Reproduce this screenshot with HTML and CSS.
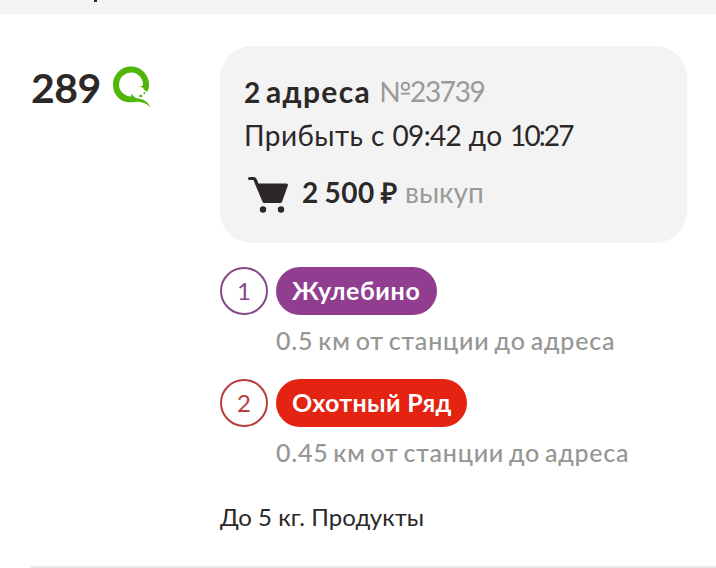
FILE: index.html
```html
<!DOCTYPE html>
<html lang="ru">
<head>
<meta charset="utf-8">
<title>Заказ</title>
<link rel="stylesheet" href="styles.css">
</head>
<body>
<header class="band"><i class="stem"></i></header>
<main class="order">
  <div class="price"><span class="amount">289</span>
    <svg class="coin" viewBox="0 0 42 44" width="42" height="44">
      <path d="M20 1.500A18 18 0 0 0 2 19.500C2 30 9 37.300 19 37.300C24 37.300 26 36.500 29 37C33 37.700 36.500 39.500 39.500 42C37 37.500 34 35 30 34C26 33.600 23 33 20.500 28.500L20 31.500A12 12 0 1 1 32 20.500L28.500 21.500C31 21.500 32.500 23 33 24.500L36 27C37.500 25 38 22 38 19.500A18 18 0 0 0 20 1.500Z" fill="#4fb509"/>
      <ellipse cx="29.800" cy="31" rx="1.600" ry="1.300" fill="#4fb509"/>
      <ellipse cx="33.300" cy="28" rx=".7" ry="1.200" fill="#4fb509"/>
    </svg>
  </div>
  <div class="details">
    <section class="card">
      <div class="line title"><b class="count">2 <span class="unit">адреса</span></b><span class="number">№23739</span></div>
      <div class="line"><p class="arrival">Прибыть с <span class="time">09:42</span> до <span class="time time-end">10:27</span></p></div>
      <div class="line buyout">
        <svg class="cart" viewBox="0 0 42 38" width="42" height="38">
          <path d="M2.500 3.500H6.500Q8 3.500 8.500 5L10.500 10H39.500L33.500 26.500H17L8 5" fill="#2b2827" stroke="#2b2827" stroke-width="3" stroke-linejoin="round" stroke-linecap="round"/>
          <circle cx="16" cy="34.500" r="3.200" fill="#2b2827"/><circle cx="34" cy="34.500" r="3.200" fill="#2b2827"/>
        </svg>
        <b class="sum">2 500 ₽</b><span class="kind">выкуп</span>
      </div>
    </section>
    <section class="stop stop-purple">
      <div class="station"><span class="index">1</span><span class="pill"><b class="name name-a">Жулебино</b></span></div>
      <div class="distance distance-a">0.5 км от станции до адреса</div>
    </section>
    <section class="stop stop-red">
      <div class="station"><span class="index">2</span><span class="pill"><b class="name name-b">Охотный Ряд</b></span></div>
      <div class="distance distance-b">0.45 км от станции до адреса</div>
    </section>
    <div class="cargo">До 5 кг. Продукты</div>
  </div>
</main>
<hr class="rule">
</body>
</html>
```
FILE: styles.css
```css
* { box-sizing: border-box; }
body { margin: 0; height: 568px; overflow: hidden; background: #fff; color: #2b2827; font-family: Lato, "Open Sans", sans-serif; white-space: nowrap; }
.band { height: 14px; background: #f3f3f3; padding-left: 94px; }
.stem { display: block; width: 3px; height: 2px; background: #2b2827; }
.order { display: flex; height: 552px; padding: 32px 29px 0 31px; }
.price { width: 189px; display: flex; align-items: flex-start; padding-top: 18px; }
.amount { font-size: 41px; font-weight: 700; line-height: 47px; letter-spacing: -.5px; width: 80px; }
.coin { margin-top: 1px; }
.details { width: 467px; }
.card { height: 197px; border-radius: 32px; background: #f3f3f3; padding: 24px; }
.line { display: flex; height: 44px; line-height: 43px; font-size: 28px; }
.count { width: 135px; word-spacing: -1px; }
.unit { font-size: 30px; letter-spacing: 1.35px; }
.number, .kind { color: #9a9a98; font-weight: 400; }
.number { letter-spacing: -1.35px; }
.arrival { margin: 0; letter-spacing: .45px; }
.time { letter-spacing: -.7px; }
.time-end { letter-spacing: -1.9px; }
.buyout { margin-top: 13px; }
.cart { margin: 4px 0 0 3px; }
.sum { margin-left: 13px; width: 103px; letter-spacing: .5px; word-spacing: -1.5px; }
.stop { height: 112px; }
.card + .stop { margin-top: 24px; }
.station { display: flex; gap: 8px; height: 48px; }
.index { width: 48px; height: 48px; border: 2px solid; border-radius: 50%; line-height: 44px; text-align: center; font-size: 24px; }
.pill { height: 48px; border-radius: 24px; color: #fff; font-size: 25px; line-height: 47px; padding-left: 16px; }
.name-a { letter-spacing: .6px; }
.name-b { letter-spacing: .35px; }
.stop-purple .index { color: #86478a; }
.stop-purple .pill { background: #913e91; width: 161px; }
.stop-red .index { color: #b73d39; }
.stop-red .pill { background: #e42313; width: 191px; }
.distance { margin: 8px 0 0 56px; font-size: 25px; line-height: 34px; color: #969693; font-weight: 500; }
.distance-a { letter-spacing: .82px; word-spacing: -2.2px; }
.distance-b { letter-spacing: .77px; word-spacing: -2.2px; }
.cargo { margin-top: 10px; font-size: 24px; line-height: 32px; letter-spacing: .05px; }
.rule { margin: 0 0 0 31px; border: 0; height: 2px; background: #e7e7e7; }
```
